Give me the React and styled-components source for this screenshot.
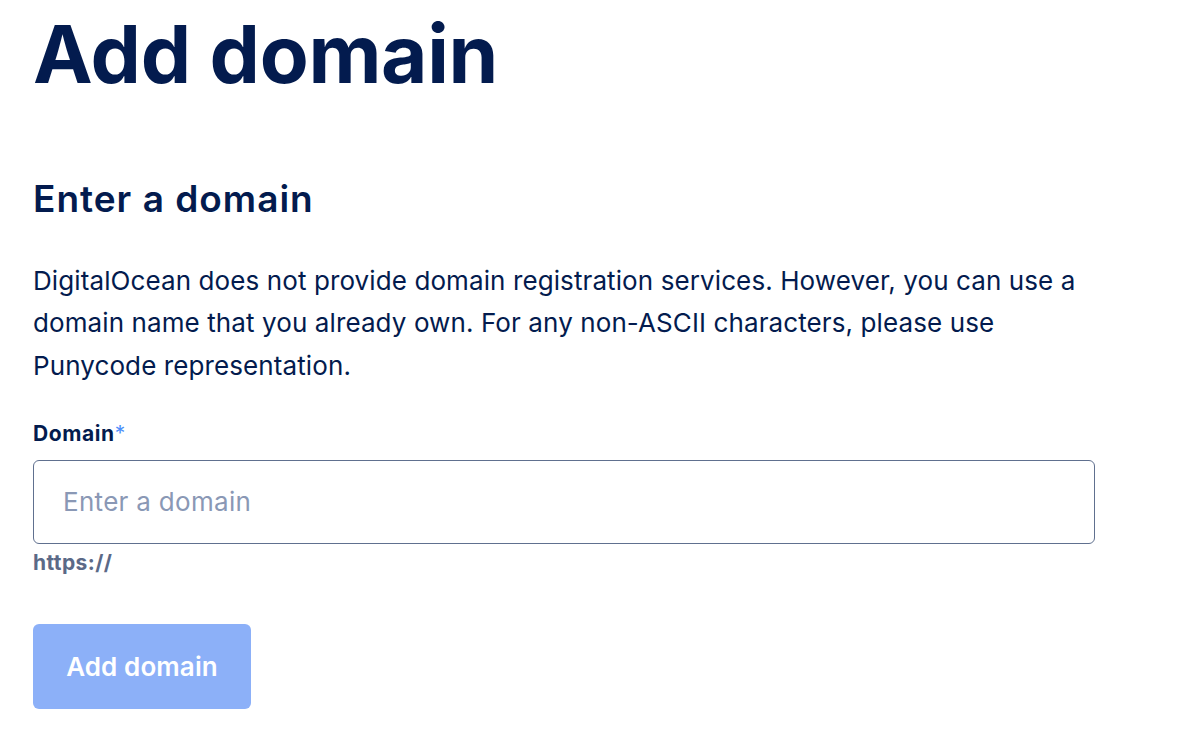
import React, { useState } from "react";
import styled, { createGlobalStyle } from "styled-components";

const GlobalStyle = createGlobalStyle`
  body {
    margin: 0;
    background: #ffffff;
    font-family: Inter, "Open Sans", sans-serif;
    color: #031b4e;
  }
`;

const Page = styled.div`
  padding: 6px 0 0 33px;
  width: 1062px;
`;

const Title = styled.h1`
  margin: 0;
  font-size: 80px;
  line-height: 96px;
  font-weight: 700;
  letter-spacing: -0.3px;
  color: #031b4e;
`;

const SectionTitle = styled.h2`
  margin: 75px 0 0;
  font-size: 37px;
  line-height: 44px;
  font-weight: 600;
  letter-spacing: 1px;
  color: #031b4e;
`;

const Description = styled.p`
  margin: 39px 0 0;
  font-size: 26px;
  line-height: 42.3px;
  letter-spacing: 0.1px;
  color: #031b4e;
`;

const Field = styled.div`
  display: flex;
  flex-direction: column;
  margin-top: 33px;
`;

const Label = styled.label`
  font-size: 21px;
  line-height: 28px;
  font-weight: 700;
  letter-spacing: 0.6px;
  color: #031b4e;
  margin-bottom: 12px;
`;

const Required = styled.span`
  color: #4d8ffb;
  font-weight: 400;
`;

const Input = styled.input`
  box-sizing: border-box;
  width: 100%;
  height: 84px;
  padding: 0 29px;
  border: 1.5px solid #60708f;
  border-radius: 6px;
  font-family: inherit;
  font-size: 26px;
  letter-spacing: 0.3px;
  color: #031b4e;
  outline: none;
  &::placeholder {
    color: #8a98b5;
  }
`;

const Hint = styled.div`
  margin-top: 5px;
  font-size: 21px;
  line-height: 28px;
  font-weight: 700;
  letter-spacing: 0.4px;
  color: #5b6987;
`;

const Button = styled.button`
  margin-top: 47px;
  width: 218px;
  height: 85px;
  border: none;
  border-radius: 6px;
  background: #8cb0f8;
  color: #ffffff;
  font-family: inherit;
  font-size: 26px;
  font-weight: 600;
  letter-spacing: 0.1px;
  cursor: not-allowed;
`;

const App = () => {
  const [domain, setDomain] = useState("");
  return (
    <>
      <GlobalStyle />
      <Page>
        <Title>Add domain</Title>
        <SectionTitle>Enter a domain</SectionTitle>
        <Description>
          DigitalOcean does not provide domain registration services. However, you can use a
          domain name that you already own. For any non-ASCII characters, please use
          Punycode representation.
        </Description>
        <Field>
          <Label>
            Domain<Required>*</Required>
          </Label>
          <Input
            value={domain}
            placeholder="Enter a domain"
            onChange={(e) => setDomain(e.currentTarget.value)}
          />
          <Hint>https://</Hint>
        </Field>
        <Button disabled={!domain}>Add domain</Button>
      </Page>
    </>
  );
};

export default App;
